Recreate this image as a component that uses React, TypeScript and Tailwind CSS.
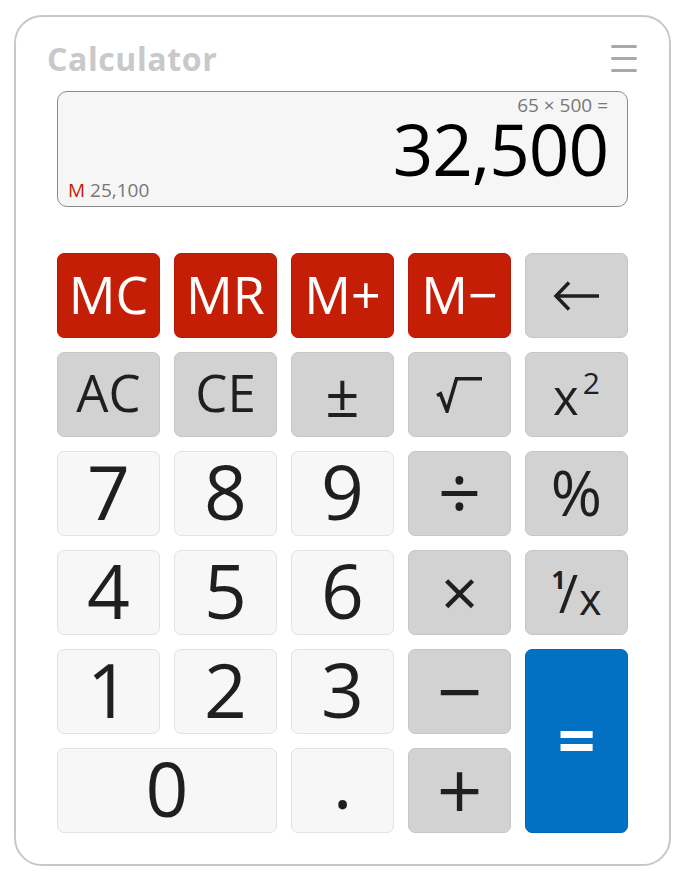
import { ReactNode } from 'react'

type Tone = 'red' | 'gray' | 'light' | 'blue'

interface KeyProps {
	children: ReactNode
	tone: Tone
	className?: string
}

const tones: Record<Tone, string> = {
	red: 'bg-[#c41f06] border-[#b51c05] text-white',
	gray: 'bg-[#d2d2d2] border-[#c6c6c6] text-[#1f1f1f]',
	light: 'bg-[#f7f7f7] border-[#e2e2e2] text-[#1f1f1f]',
	blue: 'bg-[#0271c4] border-[#0268b5] text-white',
}

const Key = ({ children, tone, className = '' }: KeyProps) => (
	<button
		className={`flex items-center justify-center rounded-[7px] border leading-none ${tones[tone]} ${className}`}
	>
		{children}
	</button>
)

const Arrow = () => (
	<svg width="48" height="32" viewBox="0 0 48 32" fill="none">
		<path d="M3 16H46" stroke="#1f1f1f" strokeWidth="3.5" />
		<path d="M16 2.5L3 16L16 29.5" stroke="#1f1f1f" strokeWidth="3.5" />
	</svg>
)

const Radical = () => (
	<svg width="48" height="36" viewBox="0 0 48 36" fill="none">
		<path d="M1 18.5L4.5 16.8L11 34L20.5 1.8H46" stroke="#1f1f1f" strokeWidth="3.6" strokeLinejoin="miter" />
	</svg>
)

export default function App() {
	return (
		<div className="w-[686px] h-[880px] bg-white pt-[15px] pl-[14px]" style={{ fontFamily: '"Open Sans", "DejaVu Sans", sans-serif' }}>
			<div className="w-[657px] h-[851px] rounded-[28px] border-2 border-[#c8c8c8] bg-white">
				{/* header */}
				<div className="flex items-start justify-between pl-[31px] pr-[32px] pt-[26px]">
					<div className="h-[32px] text-[32px] leading-[32px] font-bold tracking-[0.6px] text-[#c9c9c9]">Calculator</div>
					<div className="mt-[2px] flex flex-col gap-[9px]">
						<span className="block h-[3px] w-[26px] rounded-full bg-[#a9a9a9]" />
						<span className="block h-[3px] w-[26px] rounded-full bg-[#a9a9a9]" />
						<span className="block h-[3px] w-[26px] rounded-full bg-[#a9a9a9]" />
					</div>
				</div>

				{/* display */}
				<div className="mx-[41px] mt-[16px] h-[116px] rounded-[10px] border border-[#8a8a8a] bg-[#f6f6f6] pt-[3px] pr-[19px] pl-[10px]">
					<div className="text-right text-[19px] leading-[21px] text-[#777]">65 × 500 =</div>
					<div className="mt-[3px] text-right text-[71px] leading-[60px] text-black tracking-[-1px]">32,500</div>
					<div className="mt-[1px] text-[19px] leading-[21px] text-[#777]">
						<span className="text-[#c41f06]">M</span> 25,100
					</div>
				</div>

				{/* keypad */}
				<div className="mx-[41px] mt-[46px] grid grid-cols-5 auto-rows-[85px] gap-x-[14px] gap-y-[14px]">
					<Key tone="red" className="text-[52px] pb-[4px]">MC</Key>
					<Key tone="red" className="text-[52px] pb-[4px]">MR</Key>
					<Key tone="red" className="text-[52px] pb-[4px]">M+</Key>
					<Key tone="red" className="text-[52px] pb-[4px]">M−</Key>
					<Key tone="gray"><Arrow /></Key>

					<Key tone="gray" className="text-[51px] pb-[4px]">AC</Key>
					<Key tone="gray" className="text-[51px] pb-[4px]">CE</Key>
					<Key tone="gray" className="text-[60px] pb-[2px]">±</Key>
					<Key tone="gray"><Radical /></Key>
					<Key tone="gray">
						<span className="flex items-start">
							<span className="mt-[4px] text-[49px]">x</span>
							<span className="ml-[4px] text-[30px]">2</span>
						</span>
					</Key>

					<Key tone="light" className="text-[75px] pb-[5px]">7</Key>
					<Key tone="light" className="text-[75px] pb-[5px]">8</Key>
					<Key tone="light" className="text-[75px] pb-[5px]">9</Key>
					<Key tone="gray" className="text-[76px] pb-[4px]">÷</Key>
					<Key tone="gray" className="text-[62px] pb-[4px]">%</Key>

					<Key tone="light" className="text-[75px] pb-[5px]">4</Key>
					<Key tone="light" className="text-[75px] pb-[5px]">5</Key>
					<Key tone="light" className="text-[75px] pb-[5px]">6</Key>
					<Key tone="gray" className="text-[66px] pb-[4px]">×</Key>
					<Key tone="gray">
						<span className="flex items-start">
							<span className="mt-[1px] text-[25px] font-bold">1</span>
							<span className="-ml-[7px] text-[53px]">/</span>
							<span className="mt-[11px] ml-[1px] text-[43px]">x</span>
						</span>
					</Key>

					<Key tone="light" className="text-[75px] pb-[5px]">1</Key>
					<Key tone="light" className="text-[75px] pb-[5px]">2</Key>
					<Key tone="light" className="text-[75px] pb-[5px]">3</Key>
					<Key tone="gray" className="text-[80px] pb-[4px]">−</Key>
					<Key tone="blue" className="row-span-2 text-[66px] font-bold pb-[4px]">=</Key>

					<Key tone="light" className="col-span-2 text-[75px] pb-[5px]">0</Key>
					<Key tone="light" className="text-[75px] pb-[20px]">.</Key>
					<Key tone="gray" className="text-[80px] pb-[4px]">+</Key>
				</div>
			</div>
		</div>
	)
}
